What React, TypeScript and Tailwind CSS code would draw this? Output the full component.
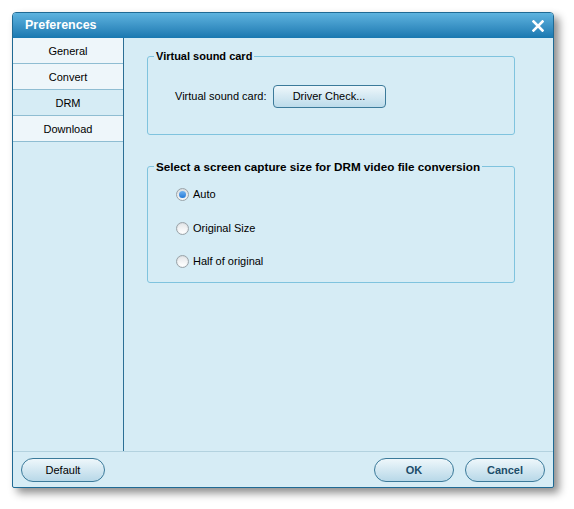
import React from "react";

const font = { fontFamily: '"Liberation Sans", Arial, sans-serif' };

function Radio({ checked, label }: { checked?: boolean; label: string }) {
  return (
    <div className="flex items-center h-[14px]">
      <span className="w-[13px] h-[13px] rounded-full border border-[#9aa3a8] bg-gradient-to-b from-[#d9dde0] to-[#f6f7f8] flex items-center justify-center">
        {checked ? (
          <span className="w-[7px] h-[7px] rounded-full bg-gradient-to-b from-[#6fb2f0] to-[#1f78d6]" />
        ) : (
          <span className="w-[9px] h-[9px] rounded-full bg-gradient-to-b from-[#e6e8ea] to-[#ffffff]" />
        )}
      </span>
      <span className="ml-[4px] text-[11px] text-black leading-none">{label}</span>
    </div>
  );
}

function PillButton({ label, bold, w }: { label: string; bold?: boolean; w: string }) {
  return (
    <button
      className={`${w} h-[24px] pt-[1px] rounded-full border border-[#3b7a9a] bg-gradient-to-b from-[#eef7fb] to-[#b8d8e8] text-[11px] ${
        bold ? "font-bold text-[#1c4d69]" : "text-black"
      } flex items-center justify-center`}
      style={font}
    >
      {label}
    </button>
  );
}

export default function App() {
  return (
    <div className="w-[574px] h-[509px] bg-white pl-[12px] pt-[12px]" style={font}>
      <div className="w-[542px] h-[476px] border border-[#1f6a94] rounded-t-[4px] rounded-b-[2px] flex flex-col bg-[#d6ecf5] shadow-[5px_5px_9px_rgba(0,0,0,0.45)]">
        {/* Title bar */}
        <div className="h-[25px] shrink-0 rounded-t-[3px] bg-gradient-to-b from-[#5db3df] to-[#1878b0] flex items-center justify-between pl-[12px] pr-[9px]">
          <span className="text-white font-bold text-[12.5px]">Preferences</span>
          <svg width="12" height="12" viewBox="0 0 12 12">
            <path d="M1.5 1.5 L10.5 10.5 M10.5 1.5 L1.5 10.5" stroke="white" strokeWidth="2.6" strokeLinecap="square" />
          </svg>
        </div>
        {/* Body */}
        <div className="h-[413px] flex">
          <div className="w-[111px] border-r border-[#2c6f95] flex flex-col text-[11px] text-black">
            <div className="h-[26px] pt-[1px] border-b border-[#8fbdd2] bg-[#eef6fa] flex items-center justify-center">General</div>
            <div className="h-[26px] pt-[1px] border-b border-[#8fbdd2] bg-[#eef6fa] flex items-center justify-center">Convert</div>
            <div className="h-[25px] pt-[2px] flex items-center justify-center">DRM</div>
            <div className="h-[27px] pt-[1px] border-y border-[#8fbdd2] bg-[#eef6fa] flex items-center justify-center">Download</div>
          </div>
          <div className="flex-1 pl-[23px] pt-[10px] flex flex-col gap-[23px]">
            <fieldset className="w-[368px] h-[87px] border border-[#7fc3de] rounded-[3px] px-0 m-0">
              <legend className="ml-[6px] px-[2px] text-[11px] font-bold text-black">Virtual sound card</legend>
              <div className="flex items-center pl-[27px] pt-[20px]">
                <span className="text-[11px] text-black">Virtual sound card:</span>
                <button
                  className="ml-[6px] w-[113px] h-[23px] rounded-[4px] border border-[#3b7a9a] bg-gradient-to-b from-[#eef7fb] to-[#bcdbea] text-[11px] text-black flex items-center justify-center"
                  style={font}
                >
                  Driver Check...
                </button>
              </div>
            </fieldset>
            <fieldset className="w-[368px] h-[125px] border border-[#7fc3de] rounded-[3px] px-0 m-0">
              <legend className="ml-[6px] px-[2px] text-[11.7px] font-bold text-black">
                Select a screen capture size for DRM video file conversion
              </legend>
              <div className="flex flex-col gap-[19.5px] pl-[28px] pt-[12px]">
                <Radio checked label="Auto" />
                <Radio label="Original Size" />
                <Radio label="Half of original" />
              </div>
            </fieldset>
          </div>
        </div>
        {/* Footer */}
        <div className="h-[36px] border-t border-[#b3d2df] flex items-center justify-between px-[8px]">
          <PillButton label="Default" w="w-[84px]" />
          <div className="flex gap-[11px]">
            <PillButton label="OK" bold w="w-[80px]" />
            <PillButton label="Cancel" bold w="w-[80px]" />
          </div>
        </div>
      </div>
    </div>
  );
}
